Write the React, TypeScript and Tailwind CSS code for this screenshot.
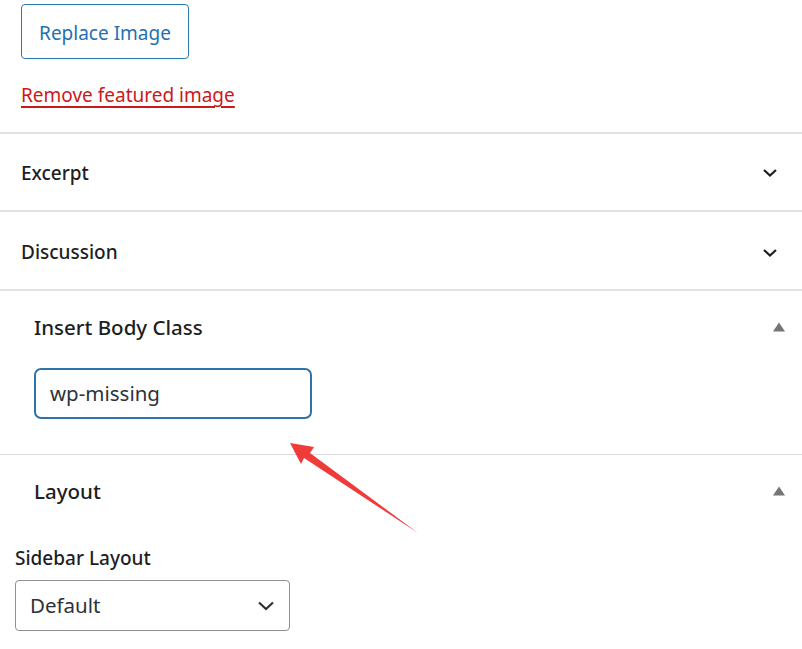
import React from "react";

const font = { fontFamily: '"Noto Sans", "Open Sans", sans-serif' };

function Chevron() {
  return (
    <svg width="16" height="10" viewBox="0 0 16 10" className="block">
      <path d="M2 2 L8 7.5 L14 2" fill="none" stroke="#1e1e1e" strokeWidth="2.2" />
    </svg>
  );
}

function Triangle() {
  return (
    <svg width="14" height="10" viewBox="0 0 14 10" className="block">
      <path d="M7 0.5 L13 9.5 L1 9.5 Z" fill="#757575" />
    </svg>
  );
}

export default function App() {
  return (
    <div className="relative w-[802px] h-[649px] bg-white overflow-hidden text-[#1e1e1e]" style={font}>
      {/* Featured image section */}
      <div className="h-[132px] pl-[21px] pt-[4px]">
        <button className="h-[55px] w-[168px] border border-[#2a7ab0] rounded-[4px] text-[#2271b1] text-[19px] pt-[3px] bg-white">
          Replace Image
        </button>
        <div className="mt-[22px]">
          <a className="text-[#cc1818] text-[19px] underline underline-offset-[4px] decoration-[1.5px] leading-[28px]">
            Remove featured image
          </a>
        </div>
      </div>
      <div className="h-[2px] bg-[#e2e2e2]" />
      {/* Excerpt */}
      <div className="h-[76px] flex items-center justify-between pl-[21px] pr-[24px] pt-[2px]">
        <span className="text-[19px] font-medium">Excerpt</span>
        <Chevron />
      </div>
      <div className="h-[2px] bg-[#e2e2e2]" />
      {/* Discussion */}
      <div className="h-[77px] flex items-center justify-between pl-[21px] pr-[24px] pt-[4px]">
        <span className="text-[19px] font-medium">Discussion</span>
        <Chevron />
      </div>
      <div className="h-[2px] bg-[#e2e2e2]" />
      {/* Insert Body Class */}
      <div className="h-[163px] pl-[34px] pr-[16px] pt-[22px]">
        <div className="flex items-center justify-between h-[28px]">
          <span className="text-[20.5px] font-medium">Insert Body Class</span>
          <Triangle />
        </div>
        <div className="mt-[27px] w-[278px] h-[51px] border-2 border-[#3173a6] rounded-[7px] flex items-center pl-[14px]">
          <span className="text-[20.5px] text-[#2c3338]">wp-missing</span>
        </div>
      </div>
      <div className="h-[1px] bg-[#dcdcdc]" />
      {/* Layout */}
      <div className="pt-[22px] pr-[16px]">
        <div className="flex items-center justify-between h-[28px] pl-[34px]">
          <span className="text-[20.5px] font-medium">Layout</span>
          <Triangle />
        </div>
        <div className="pl-[15px] mt-[41px]">
          <div className="text-[19px] font-medium leading-[24px]">Sidebar Layout</div>
          <div className="mt-[10px] w-[275px] h-[51px] border border-[#8c8f94] rounded-[4px] flex items-center justify-between pl-[14px] pr-[14px]">
            <span className="text-[20.5px] text-[#2c3338]">Default</span>
            <svg width="18" height="12" viewBox="0 0 18 12" className="block">
              <path d="M2 2.5 L9 9 L16 2.5" fill="none" stroke="#2c3338" strokeWidth="2.2" />
            </svg>
          </div>
        </div>
      </div>
      {/* Red arrow annotation */}
      <svg className="absolute left-0 top-0 pointer-events-none" width="802" height="649" viewBox="0 0 802 649">
        <polygon
          points="290,443 314,447 310,453 418,533 304,458 301,464"
          fill="#f03b3b"
        />
      </svg>
    </div>
  );
}
